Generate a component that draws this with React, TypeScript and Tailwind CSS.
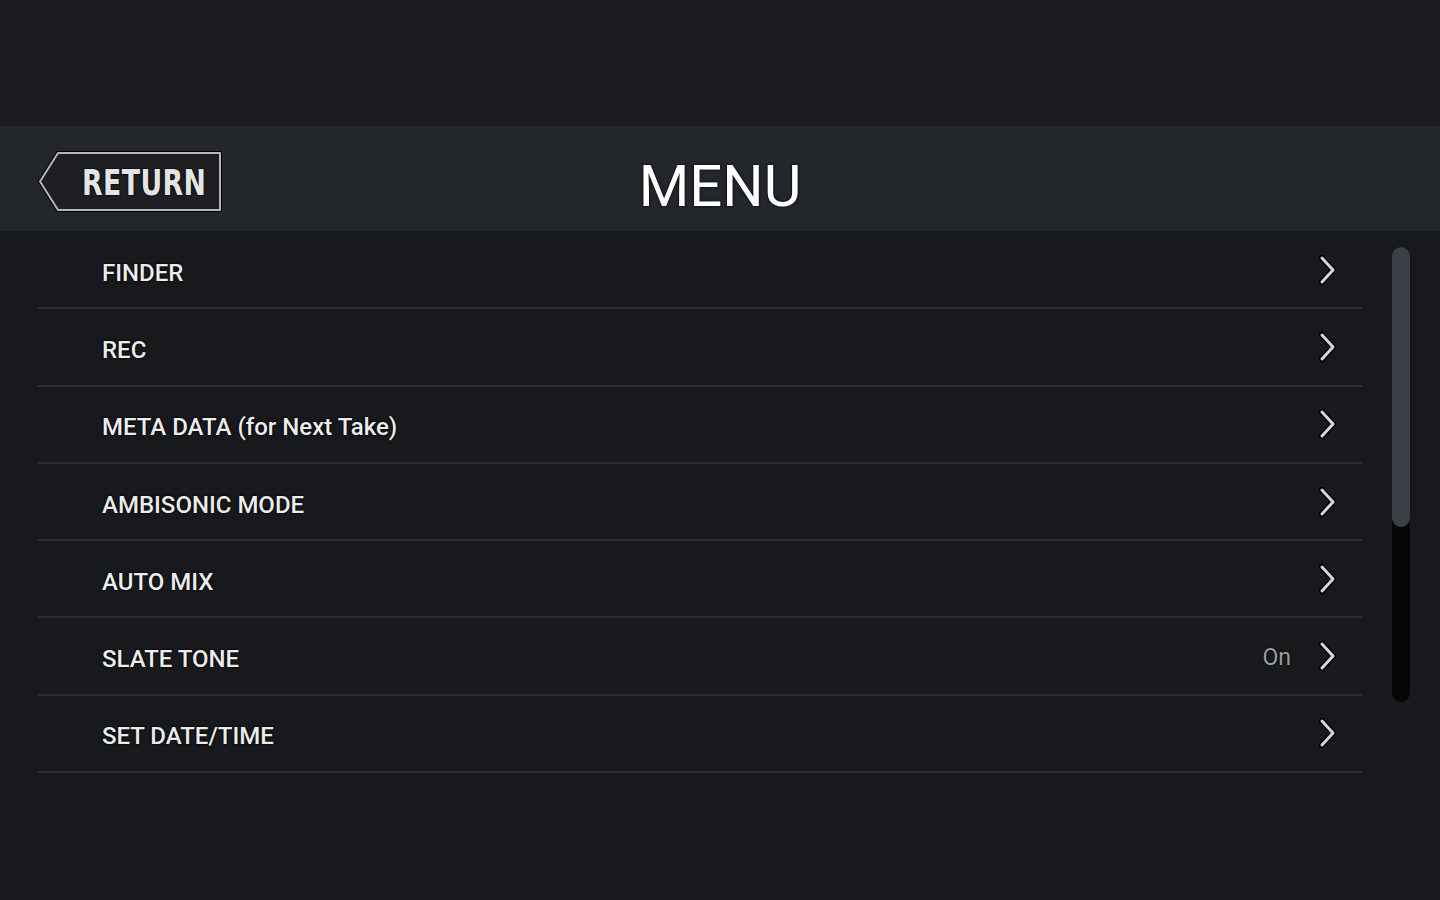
import React from 'react';

interface MenuItem {
  id: string;
  label: string;
  value?: string;
}

const MENU_ITEMS: MenuItem[] = [
  { id: 'finder', label: 'FINDER' },
  { id: 'rec', label: 'REC' },
  { id: 'meta', label: 'META DATA (for Next Take)' },
  { id: 'ambisonic', label: 'AMBISONIC MODE' },
  { id: 'automix', label: 'AUTO MIX' },
  { id: 'slate', label: 'SLATE TONE', value: 'On' },
  { id: 'datetime', label: 'SET DATE/TIME' },
];

const Chevron: React.FC = () => (
  <svg width="22" height="32" viewBox="0 0 22 32" className="shrink-0 ml-[2px]">
    <path d="M5 4 L16 16 L5 28" fill="none" stroke="#000" strokeWidth="6" strokeLinecap="round" strokeLinejoin="round" />
    <path d="M5 4 L16 16 L5 28" fill="none" stroke="#d6d6d6" strokeWidth="3" strokeLinecap="round" strokeLinejoin="round" />
  </svg>
);

const ReturnButton: React.FC = () => (
  <button className="relative mt-[6px] w-[186px] h-[62px] flex items-center justify-end pr-[18px]">
    <svg width="186" height="62" viewBox="0 0 186 62" className="absolute inset-0">
      <path d="M20 2 H182 V59 H20 L2 30.5 Z" fill="#1d1f23" stroke="#000" strokeWidth="4" strokeLinejoin="round" />
      <path d="M20 2 H182 V59 H20 L2 30.5 Z" fill="#1d1f23" stroke="#b4b6b9" strokeWidth="2" strokeLinejoin="round" />
    </svg>
    <span className="relative pt-[4px] text-[35px] leading-none font-bold tracking-[0.5px] text-[#e4e4e4] [font-family:'DejaVu_Sans_Condensed','DejaVu_Sans',sans-serif] [text-shadow:0_0_2px_#000,0_0_2px_#000] scale-x-[0.85] origin-right">
      RETURN
    </span>
  </button>
);

const App: React.FC = () => {
  return (
    <div className="w-[1440px] h-[900px] bg-[#18191d] flex flex-col overflow-hidden [font-family:Roboto,'Liberation_Sans',sans-serif]">
      {/* Status area */}
      <div className="h-[126px] bg-[#1b1d22] shrink-0" />

      {/* Header */}
      <header className="relative h-[105px] bg-[#23262b] shrink-0 flex items-center px-[38px]">
        <ReturnButton />
        <h1 className="absolute left-0 right-0 top-[25px] text-center text-[58px] leading-[70px] text-white [text-shadow:0_0_3px_#000] pointer-events-none">
          MENU
        </h1>
      </header>

      {/* Menu list */}
      <div className="flex-1 flex pt-[1px]">
        <ul className="w-[1325px] ml-[37px]">
          {MENU_ITEMS.map((item) => (
            <li
              key={item.id}
              className="h-[77.3px] flex items-center border-b-2 border-[#2b2d32] pl-[65px] pr-[23px]"
            >
              <span className="flex-1 pt-[6px] text-[24px] font-medium text-[#ececec] [text-shadow:0_0_2px_#000,0_0_2px_#000]">
                {item.label}
              </span>
              {item.value && (
                <span className="mr-[24px] pt-[5px] text-[23px] text-[#9c9c9c] [text-shadow:0_0_2px_#000]">{item.value}</span>
              )}
              <Chevron />
            </li>
          ))}
        </ul>

        {/* Scrollbar */}
        <div className="ml-[30px] mt-[15px] w-[18px] h-[455px] rounded-full bg-[#050506] flex flex-col">
          <div className="h-[280px] rounded-full bg-[#3b3f46]" />
        </div>
      </div>
    </div>
  );
};

export default App;
